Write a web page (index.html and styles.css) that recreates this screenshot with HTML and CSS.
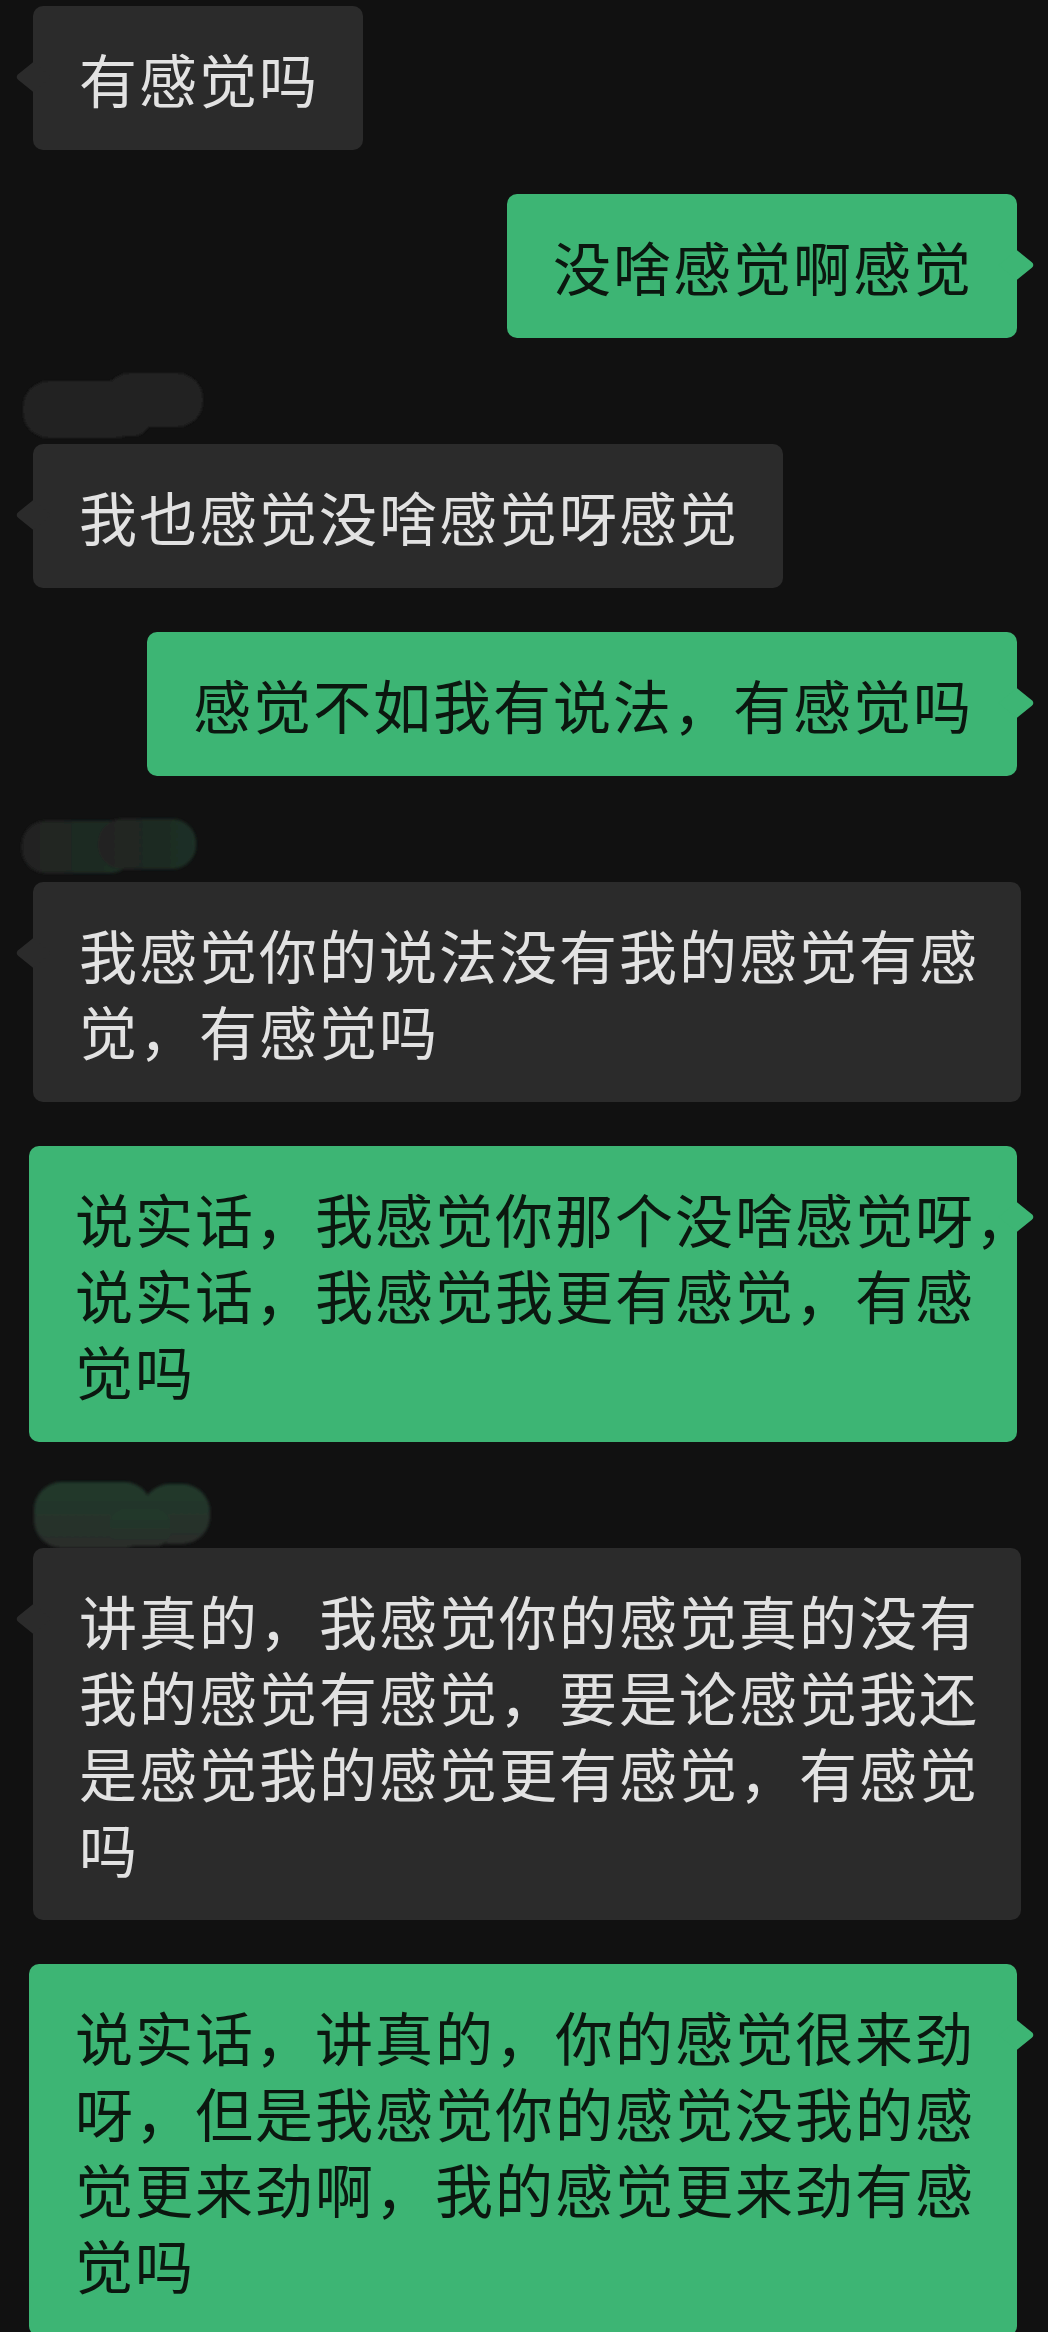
FILE: index.html
```html
<!DOCTYPE html>
<html lang="zh-CN">
<head>
  <meta charset="UTF-8">
  <title>聊天记录</title>
  <link rel="stylesheet" href="styles.css">
</head>
<body>
  <div class="chat">

    <div class="msg other">
      <div class="bubble">有感觉吗</div>
    </div>

    <div class="msg me">
      <div class="bubble">没啥感觉啊感觉</div>
    </div>

    <div class="msg other named">
      <!-- 昵称（已打码） -->
      <svg class="name" width="240" height="72" viewBox="0 0 240 72">
        <defs>
          <filter id="soft1"><feGaussianBlur stdDeviation="1.2"/></filter>
        </defs>
        <g fill="#222" filter="url(#soft1)">
          <rect x="23" y="9" width="118" height="57" rx="26"/>
          <rect x="104" y="1" width="99" height="54" rx="26"/>
          <rect x="90" y="30" width="60" height="34" rx="16"/>
        </g>
      </svg>
      <div class="bubble">我也感觉没啥感觉呀感觉</div>
    </div>

    <div class="msg me">
      <div class="bubble">感觉不如我有说法，有感觉吗</div>
    </div>

    <div class="msg other named">
      <svg class="name" width="240" height="72" viewBox="0 0 240 72">
        <defs>
          <linearGradient id="g2" x1="0" y1="0" x2="1" y2="0">
            <stop offset="0" stop-color="#212221"/>
            <stop offset="1" stop-color="#1d3025"/>
          </linearGradient>
          <filter id="soft2"><feGaussianBlur stdDeviation="1.5"/></filter>
        </defs>
        <g fill="url(#g2)" filter="url(#soft2)">
          <rect x="22" y="11" width="112" height="52" rx="24"/>
          <rect x="98" y="9" width="98" height="50" rx="24"/>
        </g>
      </svg>
      <div class="bubble">我感觉你的说法没有我的感觉有感<br>觉，有感觉吗</div>
    </div>

    <div class="msg me">
      <div class="bubble">说实话，我感觉你那个没啥感觉呀，<br>说实话，我感觉我更有感觉，有感<br>觉吗</div>
    </div>

    <div class="msg other named">
      <svg class="name" width="240" height="72" viewBox="0 0 240 72">
        <defs>
          <linearGradient id="g3" x1="0" y1="0" x2="0" y2="1">
            <stop offset="0" stop-color="#1f3a2c"/>
            <stop offset="1" stop-color="#2a2d2b"/>
          </linearGradient>
          <filter id="soft3"><feGaussianBlur stdDeviation="1.5"/></filter>
        </defs>
        <g fill="url(#g3)" filter="url(#soft3)">
          <rect x="34" y="6" width="118" height="66" rx="28"/>
          <rect x="142" y="8" width="68" height="60" rx="28"/>
          <rect x="110" y="34" width="60" height="36" rx="14"/>
        </g>
      </svg>
      <div class="bubble">讲真的，我感觉你的感觉真的没有<br>我的感觉有感觉，要是论感觉我还<br>是感觉我的感觉更有感觉，有感觉<br>吗</div>
    </div>

    <div class="msg me">
      <div class="bubble">说实话，讲真的，你的感觉很来劲<br>呀，但是我感觉你的感觉没我的感<br>觉更来劲啊，我的感觉更来劲有感<br>觉吗</div>
    </div>

  </div>
</body>
</html>
```

FILE: styles.css
```css
body {
  margin: 0;
  background: #111111;
  font-family: "Noto Sans CJK SC", "Noto Sans", sans-serif;
}

.chat {
  height: 2332px;
  overflow: hidden;
  padding-top: 6px;
  box-sizing: border-box;
}

.msg {
  display: flex;
  flex-direction: column;
  margin-top: 44px;
}

.msg:first-child {
  margin-top: 0;
}

.msg.named {
  margin-top: 34px;
}

.msg.other {
  align-items: flex-start;
  padding-left: 33px;
}

.msg.me {
  align-items: flex-end;
  padding-right: 31px;
}

.name {
  display: block;
  margin-left: -33px;
}

.bubble {
  position: relative;
  max-width: 988px;
  box-sizing: border-box;
  padding: 34px 44px 34px 46px;
  border-radius: 10px;
  font-size: 58px;
  letter-spacing: 2px;
  line-height: 76px;
  white-space: nowrap;
}

.other .bubble {
  background: #2b2b2b;
  color: #e2e2e2;
}

.me .bubble {
  background: #3db574;
  color: #0b170f;
}

/* petite pointe de la bulle */
.bubble::before {
  content: "";
  position: absolute;
  top: 58px;
  width: 26px;
  height: 26px;
  background: inherit;
  transform: scaleY(0.8) rotate(45deg);
}

.other .bubble::before {
  left: -13px;
  border-bottom-left-radius: 5px;
}

.me .bubble::before {
  right: -13px;
  border-top-right-radius: 5px;
}
```
